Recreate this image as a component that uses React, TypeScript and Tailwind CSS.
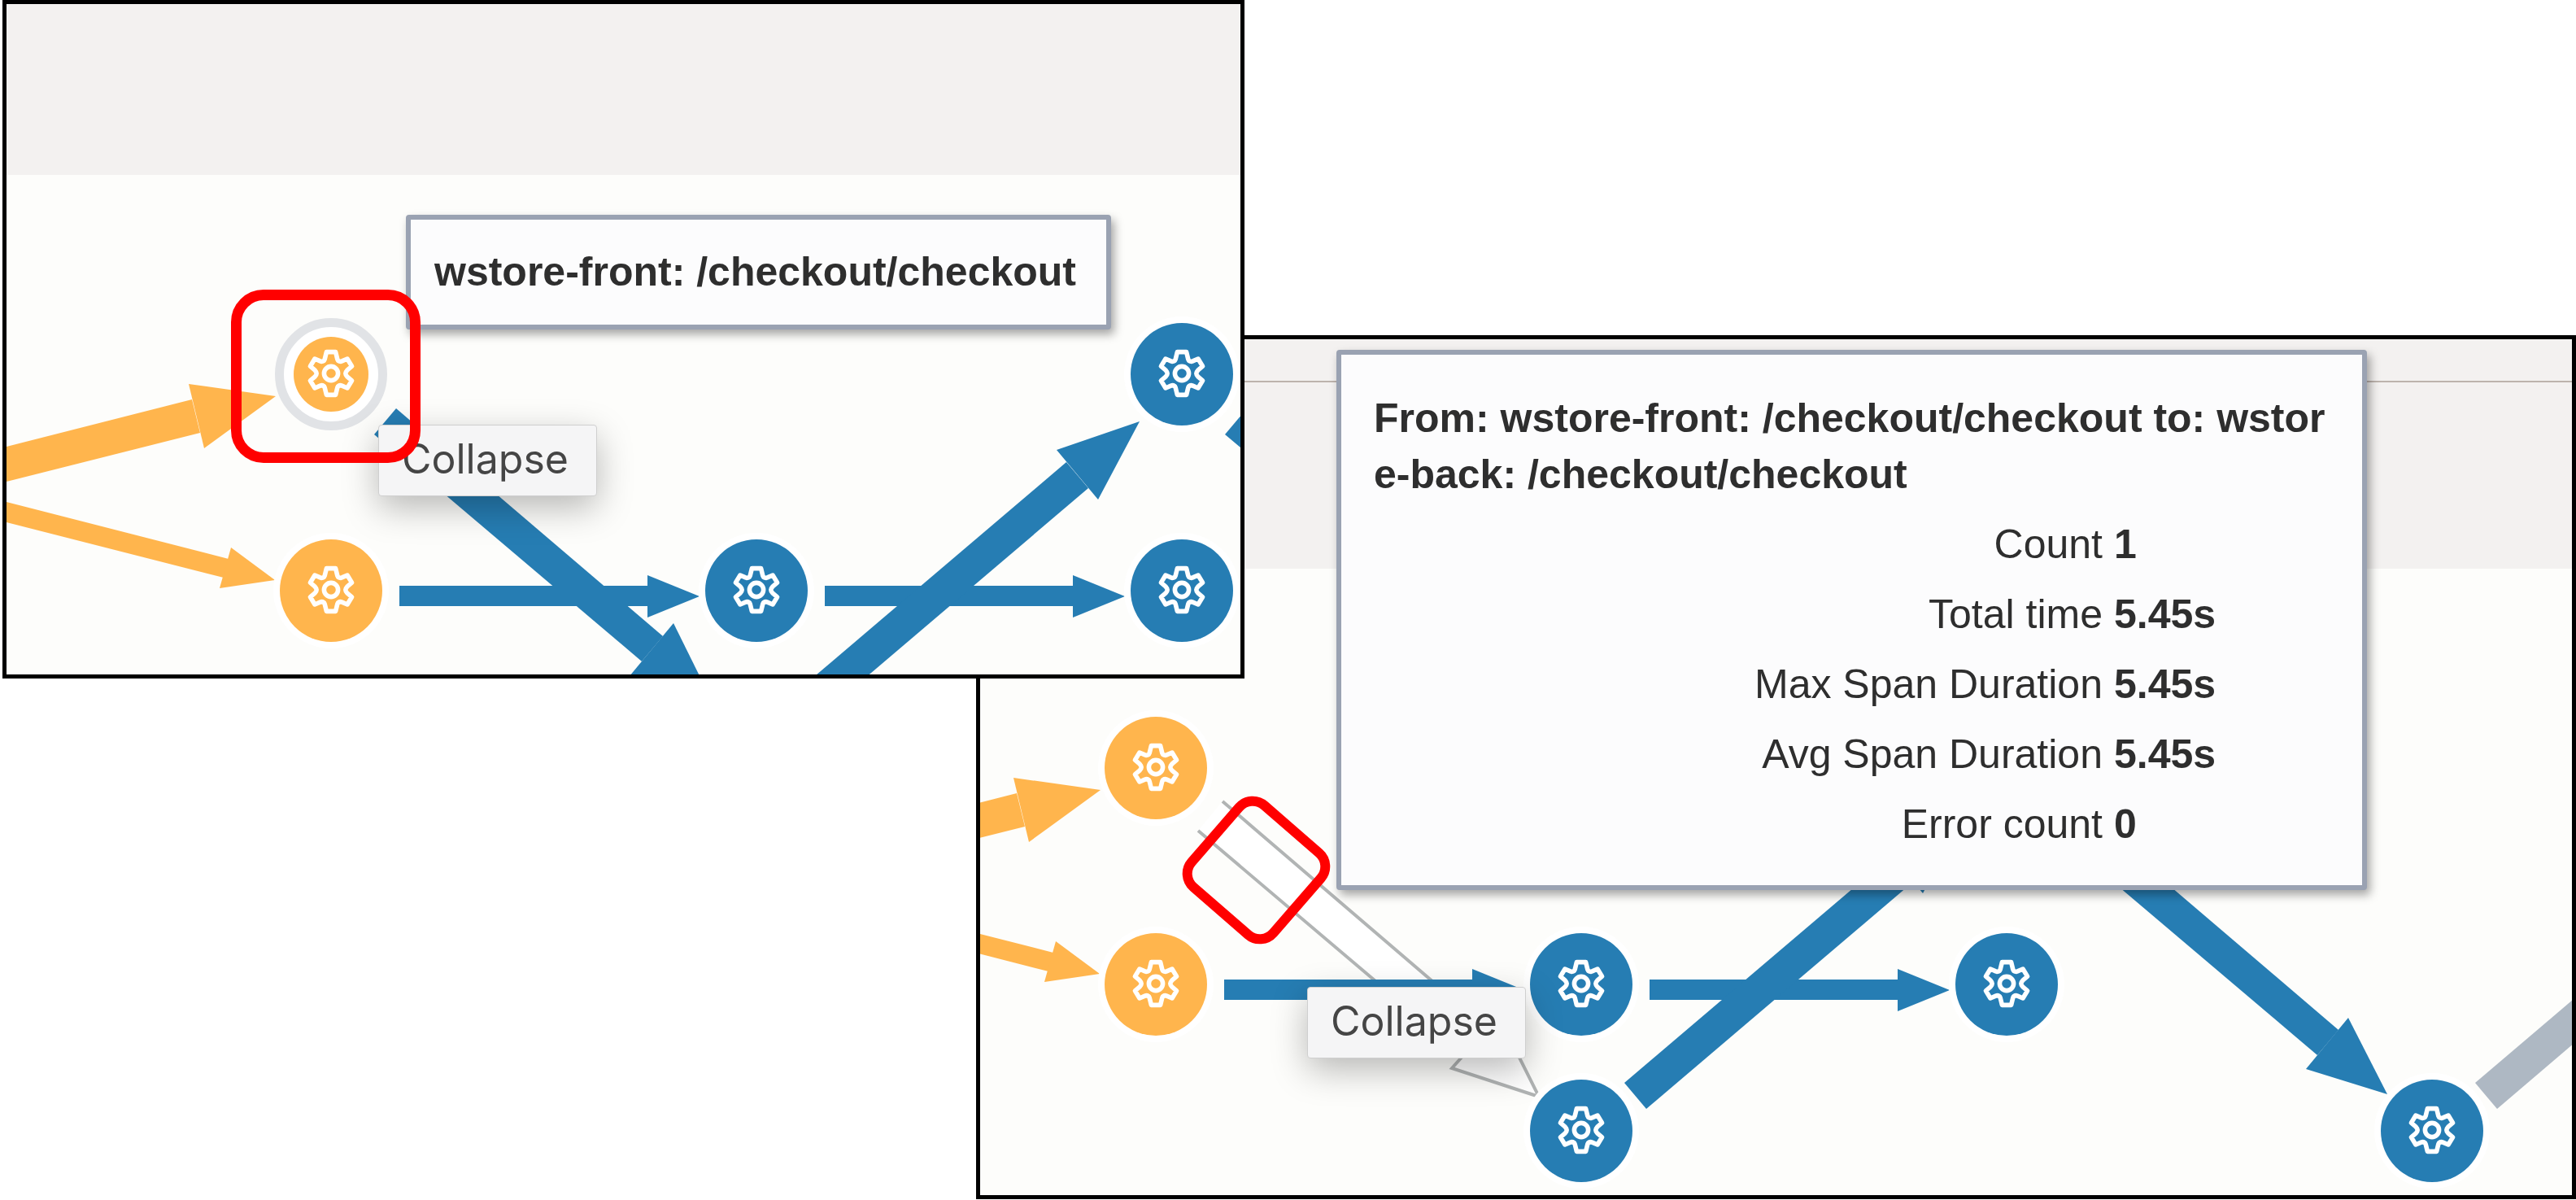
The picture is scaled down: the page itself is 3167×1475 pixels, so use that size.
import React from "react";

type Point = [number, number];
type Tone = "orange" | "blue";

const ORANGE = "#ffb54d";
const BLUE = "#267db3";
const SLATE = "#aeb8c3";

interface Edge {
  color: string;
  shaft: Point[];
  head?: Point[];
}

/* Edge and node positions share one canvas; each panel looks at it from its own origin. */
const EDGES: Record<string, Edge> = {
  entryTop: {
    color: ORANGE,
    shaft: [[0, 551], [236, 491], [246, 532], [0, 594]],
    head: [[232, 472], [339, 487], [251, 551]],
  },
  entryBottom: {
    color: ORANGE,
    shaft: [[0, 615], [281, 687], [275, 710], [0, 640]],
    head: [[284, 673], [338, 713], [270, 723]],
  },
  checkout: {
    color: BLUE,
    shaft: [[487, 502], [815, 782], [789, 813], [460, 534]],
    head: [[828, 766], [875, 861], [774, 831]],
  },
  lower: {
    color: BLUE,
    shaft: [[491, 720], [796, 720], [796, 745], [491, 745]],
    head: [[796, 707], [860, 733], [796, 759]],
  },
  lowerNext: {
    color: BLUE,
    shaft: [[1014, 720], [1319, 720], [1319, 745], [1014, 745]],
    head: [[1319, 707], [1383, 733], [1319, 759]],
  },
  rise: {
    color: BLUE,
    shaft: [[983, 847], [1311, 568], [1338, 600], [1010, 879]],
    head: [[1299, 553], [1401, 518], [1350, 614]],
  },
  fall: {
    color: BLUE,
    shaft: [[1533, 502], [1861, 782], [1835, 813], [1506, 534]],
    head: [[1873, 767], [1921, 861], [1821, 830]],
  },
  riseNext: {
    color: SLATE,
    shaft: [[2029, 847], [2357, 568], [2383, 600], [2056, 879]],
  },
};

const ALL_EDGES = Object.keys(EDGES);

const toPoints = (points: Point[]) => points.map((p) => p.join(",")).join(" ");

function EdgeShape({ edge }: { edge: Edge }) {
  return (
    <g fill={edge.color}>
      <polygon points={toPoints(edge.shaft)} />
      {edge.head && <polygon points={toPoints(edge.head)} />}
    </g>
  );
}

function HighlightedEdge() {
  return (
    <g fill="#ffffff" stroke="#b1b4b4" strokeWidth={4}>
      <polygon points="489,501 817,782 788,816 459,537" stroke="none" />
      <path d="M489 501 817 782M459 537 788 816" />
      <path d="M817 782 828 764 878 864 771 829 788 810" />
    </g>
  );
}

function GearIcon() {
  return (
    <svg
      viewBox="-32 -31 64 64"
      className="size-16 shrink-0"
      fill="none"
      stroke="#ffffff"
      strokeWidth={5.6}
      strokeLinejoin="round"
      aria-hidden="true"
    >
      <path d="M-5.6 -26.4H5.6L7.8 -17.4Q8.8 -14.6 11.8 -14.6L13.4 -15.2L20 -18L25.6 -8.8L20 -4.2Q17.8 -1.8 17.8 0Q17.8 1.8 20 4.2L25.6 8.8L20 18L13.4 15.2L11.8 14.6Q8.8 14.6 7.8 17.4L5.6 26.4H-5.6L-7.8 17.4Q-8.8 14.6 -11.8 14.6L-13.4 15.2L-20 18L-25.6 8.8L-20 4.2Q-17.8 1.8 -17.8 0Q-17.8 -1.8 -20 -4.2L-25.6 -8.8L-20 -18L-13.4 -15.2L-11.8 -14.6Q-8.8 -14.6 -7.8 -17.4Z" />
      <circle r={8.6} />
    </svg>
  );
}

interface NodeData {
  x: number;
  y: number;
  tone: Tone;
  focused?: boolean;
}

function GraphNode({ x, y, tone, focused }: NodeData) {
  const fill = tone === "orange" ? "bg-[#ffb54d]" : "bg-[#267db3]";
  return (
    <div
      className="absolute size-0 flex items-center justify-center"
      style={{ left: x, top: y }}
    >
      <button
        type="button"
        aria-label="Service operation"
        className={
          focused
            ? "size-[138px] shrink-0 rounded-full border-[11px] border-[#e1e3e6] bg-white p-3 flex"
            : "size-[142px] shrink-0 rounded-full bg-white p-2 flex"
        }
      >
        <span className={`flex-1 self-stretch rounded-full flex items-center justify-center ${fill}`}>
          <GearIcon />
        </span>
      </button>
    </div>
  );
}

interface GraphProps {
  originX: number;
  originY: number;
  nodes: NodeData[];
  highlight?: boolean;
}

function Graph({ originX, originY, nodes, highlight }: GraphProps) {
  return (
    <div className="absolute size-0" style={{ left: -originX, top: -originY }}>
      <svg width={3200} height={1500} className="max-w-none" aria-hidden="true">
        {highlight && <HighlightedEdge />}
        {ALL_EDGES.filter((id) => !(highlight && id === "checkout")).map((id) => (
          <EdgeShape key={id} edge={EDGES[id]} />
        ))}
      </svg>
      {nodes.map((n) => (
        <GraphNode key={`${n.x}-${n.y}`} {...n} />
      ))}
    </div>
  );
}

function CollapseTip({ className }: { className: string }) {
  return (
    <div
      role="tooltip"
      className={`absolute rounded-[4px] border border-[#cfcfcf] bg-[#f5f5f6] pt-1.5 pr-[34px] pb-2.5 pl-7 font-['Inter',sans-serif] text-[50px] leading-[70px] text-[#454545] shadow-[0_14px_44px_rgba(0,0,0,0.28)] ${className}`}
    >
      Collapse
    </div>
  );
}

const POPOVER =
  "absolute rounded-[4px] border-[6px] border-[#9aa2b2] bg-[#fcfcfd] text-[50px] leading-[69px] text-[#2e2e2e] shadow-[4px_6px_12px_rgba(0,0,0,0.35)]";

const STATS: [string, string][] = [
  ["Count", "1"],
  ["Total time", "5.45s"],
  ["Max Span Duration", "5.45s"],
  ["Avg Span Duration", "5.45s"],
  ["Error count", "0"],
];

const NODE_VIEW: NodeData[] = [
  { x: 407, y: 460, tone: "orange", focused: true },
  { x: 407, y: 726, tone: "orange" },
  { x: 930, y: 726, tone: "blue" },
  { x: 1453, y: 460, tone: "blue" },
  { x: 1453, y: 726, tone: "blue" },
];

const EDGE_VIEW: NodeData[] = [
  { x: 407, y: 460, tone: "orange" },
  { x: 407, y: 726, tone: "orange" },
  { x: 930, y: 726, tone: "blue" },
  { x: 930, y: 906, tone: "blue" },
  { x: 1453, y: 726, tone: "blue" },
  { x: 1976, y: 906, tone: "blue" },
];

export default function App() {
  return (
    <main className="grid grid-cols-[1197fr_330fr_1637fr] grid-rows-[412px_422px_640px] bg-white pl-[3px] font-['Liberation_Sans',Arial,sans-serif]">
      <section
        aria-label="Operation details"
        className="relative z-10 col-start-1 col-end-3 row-start-1 row-end-3 overflow-hidden border-[5px] border-black bg-[#fdfdfb]"
      >
        <header className="h-[210px] bg-[#f3f1f0]" />
        <Graph originX={8} originY={5} nodes={NODE_VIEW} />
        <div className={`${POPOVER} left-[491px] top-[259px] py-[30px] pr-[37px] pl-[29px] font-bold whitespace-nowrap`}>
          wstore-front: /checkout/checkout
        </div>
        <CollapseTip className="left-[457px] top-[517px]" />
        <div className="absolute left-[276px] top-[351px] h-[213px] w-[233px] rounded-[40px] border-[13px] border-[#ff0000]" />
      </section>

      <section
        aria-label="Edge details"
        className="relative col-start-2 col-end-4 row-start-2 row-end-4 overflow-hidden border-[5px] border-black bg-[#fdfdfb]"
      >
        <header className="bg-[#f3f1f0]">
          <div className="h-[53px] border-b-2 border-[#bdb3ad]" />
          <div className="h-[229px]" />
        </header>
        <Graph originX={191} originY={-67} nodes={EDGE_VIEW} highlight />
        <div className={`${POPOVER} left-[438px] top-[13px] w-[1267px] px-10 pt-11 pb-8`}>
          <h2 className="break-all font-bold">
            From: wstore-front: /checkout/checkout to: wstore-back: /checkout/checkout
          </h2>
          <table className="mt-2 w-full border-collapse">
            <tbody>
              {STATS.map(([label, value]) => (
                <tr key={label} className="h-[86px]">
                  <th scope="row" className="w-[910px] p-0 pr-3.5 text-right font-normal">
                    {label}
                  </th>
                  <td className="p-0 font-bold">{value}</td>
                </tr>
              ))}
            </tbody>
          </table>
        </div>
        <CollapseTip className="left-[402px] top-[796px]" />
        <div className="absolute left-[267px] top-[580px] size-[145px] rotate-[41deg] rounded-[28px] border-[12px] border-[#ff0000]" />
      </section>
    </main>
  );
}
